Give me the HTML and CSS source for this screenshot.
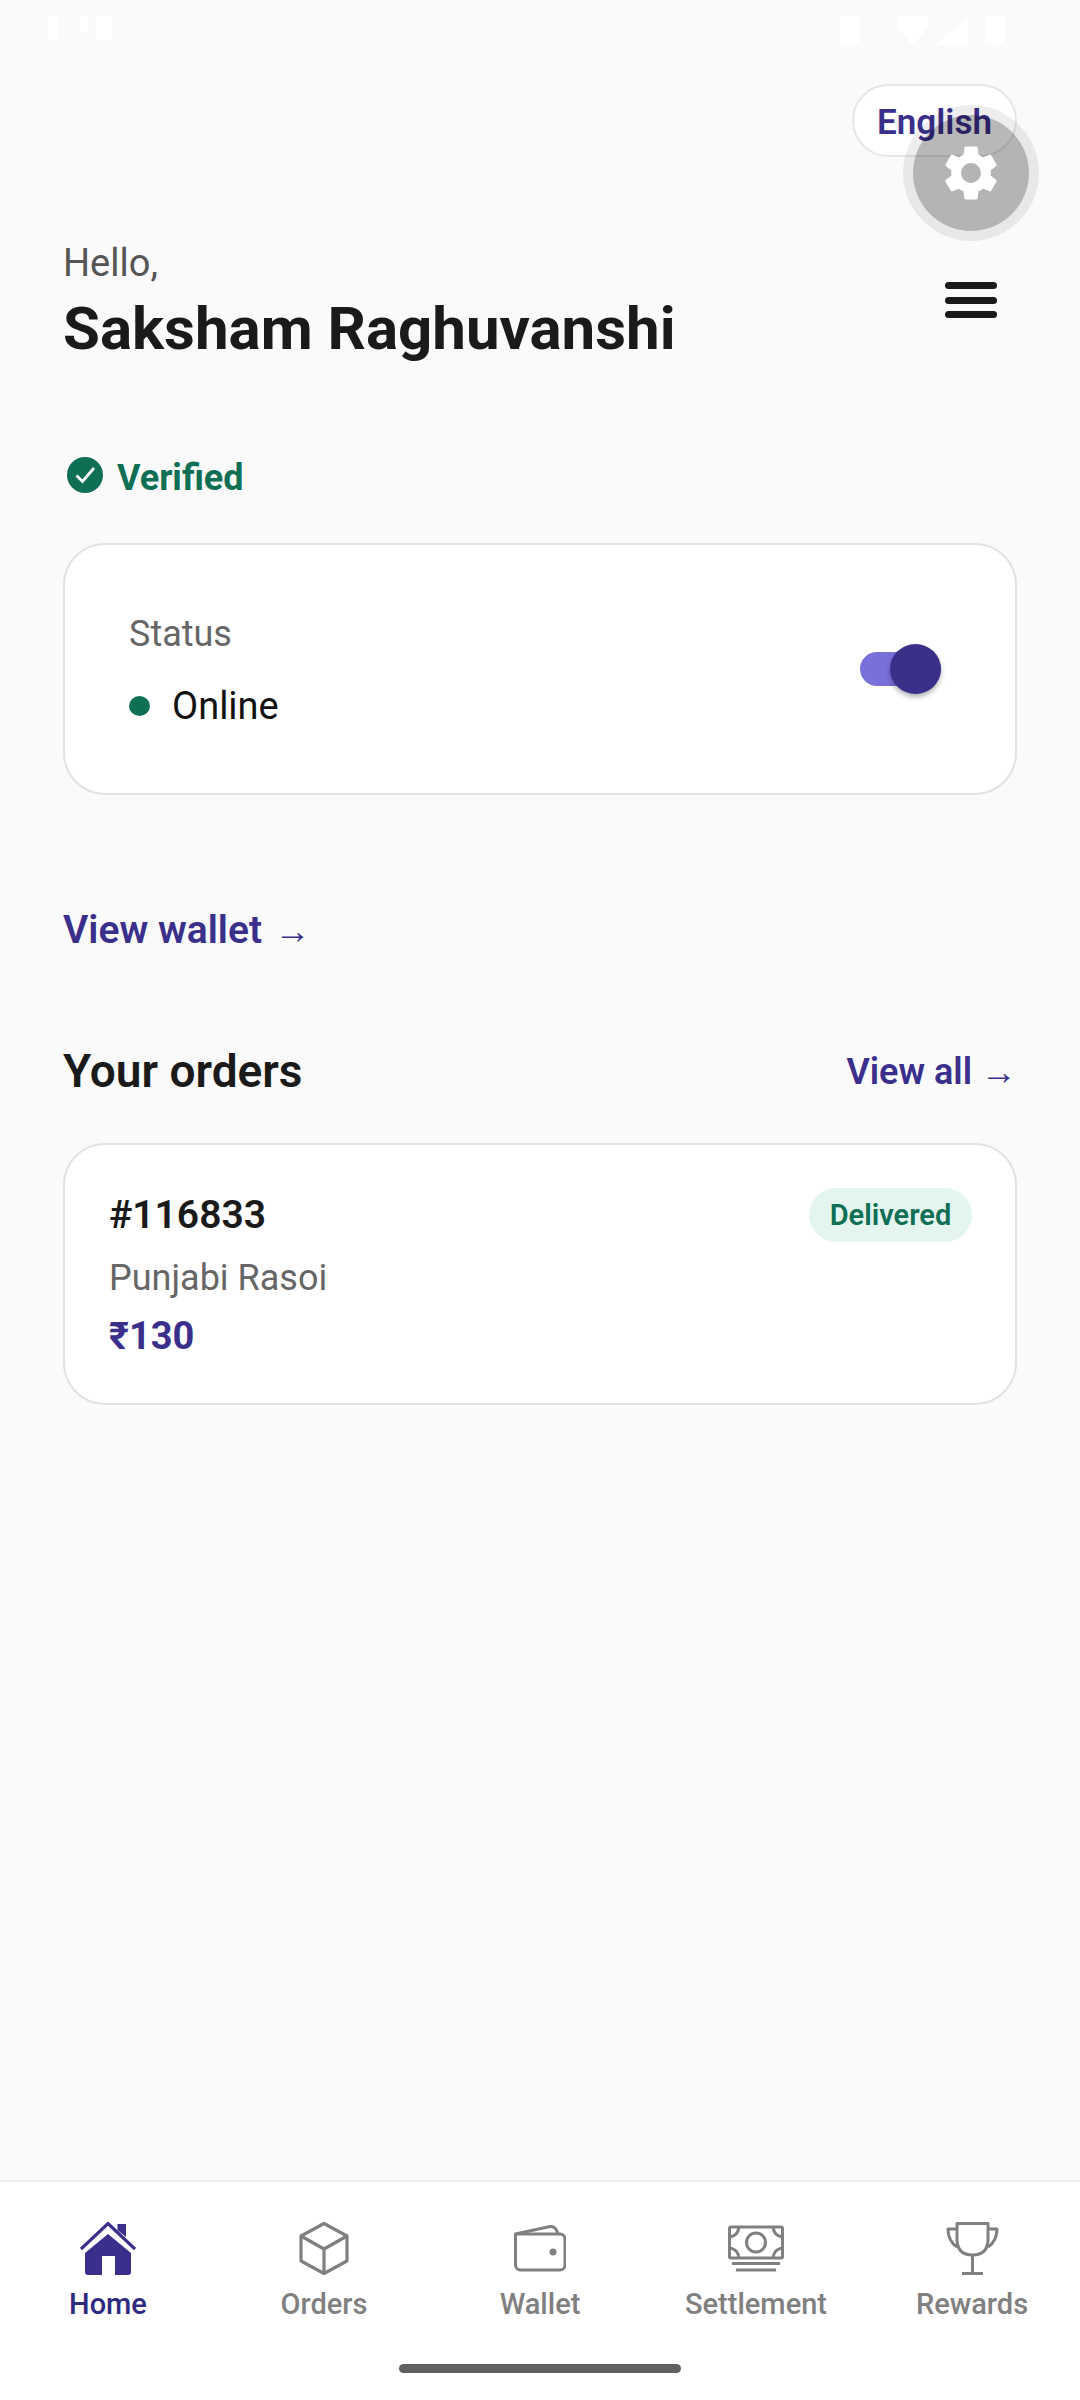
FILE: index.html
```html
<!DOCTYPE html>
<html lang="en">
<head>
  <meta charset="UTF-8">
  <meta name="viewport" content="width=device-width, initial-scale=1.0">
  <title>Home</title>
  <link rel="stylesheet" href="styles.css">
</head>
<body>
<div class="screen">
  <div class="statusbar">
    <div class="status-time">
      <span class="blk blk-a"></span>
      <span class="blk blk-b"></span>
      <span class="blk blk-c"></span>
    </div>
    <div class="status-icons">
      <span class="blk blk-d"></span>
      <span class="blk blk-e"></span>
      <span class="blk blk-f"></span>
      <span class="blk blk-g"></span>
    </div>
  </div>

  <main class="content">
    <div class="lang-row">
      <button class="lang-btn">English</button>
    </div>

    <header class="greeting">
      <div>
        <p class="hello">Hello,</p>
        <h1 class="name">Saksham Raghuvanshi</h1>
      </div>
      <div class="burger"><span></span><span></span><span></span></div>
    </header>

    <div class="verified">
      <svg class="verified-icon" viewBox="0 0 36 36">
        <circle cx="18" cy="18" r="18" fill="#0f6f55"/>
        <path d="M9.500 18.500l6 6L27 11" fill="none" stroke="#fff" stroke-width="2.800"/>
      </svg>
      <span>Verified</span>
    </div>

    <section class="card status-card">
      <div class="status-text">
        <p class="status-label">Status</p>
        <p class="status-value"><span class="dot"></span>Online</p>
      </div>
      <div class="toggle"><span class="thumb"></span></div>
    </section>

    <a class="wallet-link">View wallet <span class="arrow">→</span></a>

    <div class="orders-head">
      <h2>Your orders</h2>
      <a class="all-link">View all <span class="arrow">→</span></a>
    </div>

    <section class="card order-card">
      <div class="order-top">
        <span class="order-id">#116833</span>
        <span class="badge">Delivered</span>
      </div>
      <p class="order-shop">Punjabi Rasoi</p>
      <p class="order-price">₹130</p>
    </section>
  </main>

  <nav class="tabs">
    <div class="tab active">
      <svg class="tab-icon" viewBox="0 0 56 53">
        <path d="M1 27L28 1.5 55 27" fill="none" stroke="#3b2f8c" stroke-width="3.2"/>
        <path d="M37.5 2H46V15L37.5 8Z" fill="#3b2f8c"/>
        <path d="M28 12L51 31V50a3 3 0 0 1-3 3H35V34H22V53H8a3 3 0 0 1-3-3V31Z" fill="#3b2f8c"/>
      </svg>
      <span>Home</span>
    </div>
    <div class="tab">
      <svg class="tab-icon" viewBox="0 0 50 53" fill="none" stroke="#808080" stroke-width="3.2" stroke-linejoin="round">
        <path d="M25 1.5L48 14V39L25 51.5 2 39V14Z"/>
        <path d="M2 14L25 27 48 14M25 27V51.5"/>
      </svg>
      <span>Orders</span>
    </div>
    <div class="tab">
      <svg class="tab-icon" viewBox="0 0 52 53" fill="none" stroke="#808080" stroke-width="3" stroke-linejoin="round">
        <path d="M1.5 12L36 4.5Q42 4 44 12"/>
        <path d="M1.5 12H46a5 5 0 0 1 5 5V43a5 5 0 0 1-5 5H6.500a5 5 0 0 1-5-5Z"/>
        <circle cx="39" cy="30" r="3.500" fill="#808080" stroke="none"/>
      </svg>
      <span>Wallet</span>
    </div>
    <div class="tab">
      <svg class="tab-icon" viewBox="0 0 56 53" fill="none" stroke="#808080" stroke-width="3">
        <rect x="1.500" y="5" width="53" height="31" rx="1.500"/>
        <circle cx="28" cy="20.500" r="9.500"/>
        <path d="M1.500 15Q10 14 11 5M54.500 15Q46 14 45 5M1.500 26Q10 27 11 36M54.500 26Q46 27 45 36"/>
        <path d="M4 41.500H52M8 48H48"/>
      </svg>
      <span>Settlement</span>
    </div>
    <div class="tab">
      <svg class="tab-icon" viewBox="0 0 53 53" fill="none" stroke="#808080" stroke-width="3" stroke-linejoin="round">
        <path d="M11 1.500H42V17Q42 33 26.500 33 11 33 11 17Z"/>
        <path d="M26.500 33V51M16 51.500H37"/>
        <path d="M11 7H2Q2 19 11 25M42 7H51Q51 19 42 25"/>
      </svg>
      <span>Rewards</span>
    </div>
  </nav>
  <div class="home-bar-wrap"><div class="home-bar"></div></div>

  <!-- floating settings button, sits over the language pill -->
  <button class="fab">
    <svg viewBox="0 0 24 24" class="fab-icon">
      <path fill="#fff" d="M19.14 12.94c.04-.3.06-.61.06-.94 0-.32-.02-.64-.07-.94l2.03-1.58c.18-.14.23-.41.12-.61l-1.92-3.32c-.12-.22-.37-.29-.59-.22l-2.39.96c-.5-.38-1.03-.7-1.62-.94l-.36-2.54c-.04-.24-.24-.41-.48-.41h-3.84c-.24 0-.43.17-.47.41l-.36 2.54c-.59.24-1.13.57-1.62.94l-2.39-.96c-.22-.08-.47 0-.59.22L2.74 8.87c-.12.21-.08.47.12.61l2.03 1.58c-.05.3-.09.63-.09.94s.02.64.07.94l-2.03 1.58c-.18.14-.23.41-.12.61l1.92 3.32c.12.22.37.29.59.22l2.39-.96c.5.38 1.03.7 1.62.94l.36 2.54c.05.24.24.41.48.41h3.84c.24 0 .44-.17.47-.41l.36-2.54c.59-.24 1.13-.56 1.62-.94l2.39.96c.22.08.47 0 .59-.22l1.92-3.32c.12-.22.07-.47-.12-.61l-2.01-1.58zM12 15.6c-1.98 0-3.6-1.62-3.6-3.6s1.62-3.6 3.6-3.6 3.6 1.62 3.6 3.6-1.62 3.6-3.6 3.6z"/>
    </svg>
  </button>
</div>
</body>
</html>
```

FILE: styles.css
```css
* {
  box-sizing: border-box;
}
html, body {
  margin: 0;
  padding: 0;
}
body {
  font-family: Roboto, "Noto Sans", sans-serif;
  background-color: #fafafa;
  color: #1a1a1a;
}
p, h1, h2 {
  margin: 0;
}
.screen {
  position: relative;
  width: 1080px;
  height: 2400px;
  display: flex;
  flex-direction: column;
}

/* status bar, blanked out in the capture */
.statusbar {
  height: 60px;
  padding: 16px 75px 0 48px;
  display: flex;
  justify-content: space-between;
  align-items: flex-start;
}
.status-time, .status-icons {
  display: flex;
}
.blk {
  display: block;
  background-color: #fff;
}
.blk-a { width: 10px; height: 24px; }
.blk-b { width: 8px; height: 16px; margin-left: 22px; }
.blk-c { width: 16px; height: 24px; margin-left: 8px; }
.blk-d { width: 20px; height: 29px; }
.blk-e { width: 31px; height: 29px; margin-left: 37px; clip-path: polygon(0 0, 100% 0, 100% 40%, 50% 100%, 0 40%); }
.blk-f { width: 31px; height: 29px; margin-left: 9px; clip-path: polygon(100% 0, 100% 100%, 0 100%); }
.blk-g { width: 20px; height: 29px; margin-left: 17px; }

.content {
  flex: 1;
  padding: 24px 63px 0;
}
.lang-row {
  display: flex;
  justify-content: flex-end;
}
.lang-btn {
  height: 73px;
  width: 165px;
  padding: 4px 0 0;
  border: 2px solid #e6e6e6;
  border-radius: 37px;
  background-color: #fff;
  font-family: inherit;
  font-size: 35px;
  font-weight: 600;
  color: #3b2f8c;
}

.greeting {
  margin-top: 84px;
  display: flex;
  justify-content: space-between;
  align-items: flex-start;
}
.hello {
  font-size: 38px;
  line-height: 44px;
  color: #555;
}
.name {
  margin-top: 9px;
  font-size: 60px;
  line-height: 70px;
  font-weight: 700;
}
.burger {
  margin: 41px 20px 0 0;
  width: 52px;
  display: flex;
  flex-direction: column;
  gap: 7.500px;
}
.burger span {
  height: 7px;
  border-radius: 4px;
  background-color: #1a1a1a;
}

.verified {
  margin-top: 93px;
  display: flex;
  align-items: center;
  gap: 14px;
  padding-left: 4px;
  font-size: 36px;
  font-weight: 700;
  color: #0f6f55;
}
.verified-icon {
  width: 36px;
  height: 36px;
  margin-bottom: 6px;
}

.card {
  background-color: #fff;
  border: 2px solid #e2e2e2;
  border-radius: 42px;
}
.status-card {
  margin-top: 44px;
  height: 252px;
  padding: 0 74px 0 64px;
  display: flex;
  justify-content: space-between;
  align-items: center;
}
.status-text {
  padding-top: 2px;
}
.status-label {
  font-size: 36px;
  line-height: 44px;
  color: #666;
}
.status-value {
  margin-top: 27px;
  display: flex;
  align-items: center;
  gap: 22px;
  font-size: 38px;
  line-height: 46px;
  color: #111;
}
.dot {
  width: 21px;
  height: 20px;
  border-radius: 50%;
  background-color: #0f6f55;
}
.toggle {
  position: relative;
  width: 81px;
  height: 34px;
  border-radius: 17px;
  background-color: #7a70dc;
}
.thumb {
  position: absolute;
  right: 0;
  top: -8px;
  width: 51px;
  height: 50px;
  border-radius: 50%;
  background-color: #3b3089;
  box-shadow: 0 3px 5px rgba(0, 0, 0, 0.3);
}

.wallet-link {
  display: block;
  margin-top: 112px;
  font-size: 39px;
  line-height: 46px;
  font-weight: 600;
  color: #3b2f8c;
}
.arrow {
  font-size: 36px;
  margin-left: 3px;
}
.orders-head {
  margin-top: 90px;
  display: flex;
  justify-content: space-between;
  align-items: center;
}
.orders-head h2 {
  font-size: 46px;
  line-height: 54px;
  font-weight: 600;
}
.all-link {
  padding-top: 2px;
  font-size: 36px;
  font-weight: 600;
  color: #3b2f8c;
}
.all-link .arrow {
  margin-left: 0;
}

.order-card {
  margin-top: 45px;
  height: 262px;
  padding: 43px 43px 0 44px;
}
.order-top {
  display: flex;
  justify-content: space-between;
  align-items: center;
}
.order-id {
  font-size: 39px;
  font-weight: 600;
}
.badge {
  width: 163px;
  height: 54px;
  border-radius: 27px;
  background-color: #e3f5ee;
  display: flex;
  align-items: center;
  justify-content: center;
  font-size: 29px;
  font-weight: 600;
  color: #0f6f55;
}
.order-shop {
  margin-top: 13px;
  font-size: 36px;
  line-height: 46px;
  color: #666;
}
.order-price {
  margin-top: 13px;
  font-size: 38px;
  line-height: 44px;
  font-weight: 700;
  color: #3b2f8c;
}

.tabs {
  height: 160px;
  padding-top: 40px;
  display: grid;
  grid-template-columns: repeat(5, 1fr);
  align-items: start;
  background-color: #fff;
  border-top: 2px solid #f0f0f0;
}
.tab {
  display: flex;
  flex-direction: column;
  align-items: center;
  gap: 12px;
  font-size: 29px;
  line-height: 34px;
  font-weight: 500;
  color: #808080;
}
.tab.active {
  color: #2f2a80;
}
.tab-icon {
  height: 53px;
  display: block;
}
.home-bar-wrap {
  height: 60px;
  padding-top: 24px;
  background-color: #fff;
  display: flex;
  justify-content: center;
}
.home-bar {
  width: 282px;
  height: 9px;
  border-radius: 5px;
  background-color: #5f5f5f;
}

.fab {
  position: absolute;
  left: 913px;
  top: 115px;
  width: 116px;
  height: 116px;
  padding: 0;
  border: 0;
  border-radius: 50%;
  background-color: rgba(0, 0, 0, 0.28);
  box-shadow: 0 0 0 10px rgba(0, 0, 0, 0.07);
  display: flex;
  align-items: center;
  justify-content: center;
}
.fab-icon {
  width: 66px;
  height: 66px;
}
```
